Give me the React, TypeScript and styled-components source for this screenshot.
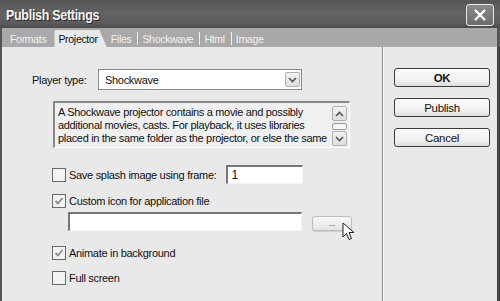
import styled, { createGlobalStyle } from "styled-components"

const GlobalStyle = createGlobalStyle`
	html, body {
		margin: 0;
		padding: 0;
		background: #e9e9e9;
	}
	body {
		font-family: "Liberation Sans", Arial, sans-serif;
	}
`

const Window = styled.div`
	width: 500px;
	height: 301px;
	display: flex;
	flex-direction: column;
	overflow: hidden;
	font-family: "Liberation Sans", Arial, sans-serif;
	font-size: 11px;
	letter-spacing: -0.3px;
	color: #111;
`

const TitleBar = styled.div`
	height: 28px;
	display: flex;
	align-items: center;
	justify-content: space-between;
	padding: 0 6px 0 6px;
	background: linear-gradient(#545454, #646464 45%, #5a5a5a 85%, #4a4a4a);
	box-sizing: border-box;
`

const Title = styled.div`
	font-weight: bold;
	font-size: 12.5px;
	letter-spacing: -0.3px;
	color: #f4f4f4;
	text-shadow: 1px 1px 0 #2a2a2a;
	margin-top: 1px;
	transform: scaleY(1.15);
`

const CloseButton = styled.div`
	width: 26px;
	height: 20px;
	border: 1.5px solid #e8e8e8;
	border-radius: 3px;
	background: linear-gradient(#8a8a8a, #6c6c6c);
	display: flex;
	align-items: center;
	justify-content: center;
	margin-top: 1px;
`

const TabBar = styled.div`
	height: 19px;
	background: #a9a9a9;
	display: flex;
	align-items: flex-end;
	padding-left: 4px;
	border-left: 2px solid #555;
	border-right: 3px solid #555;
`

const Tab = styled.div<{ $active?: boolean }>`
	height: ${(p) => (p.$active ? "17px" : "16px")};
	display: flex;
	align-items: center;
	margin-left: ${(p) => (p.$active ? "3px" : "0")};
	padding: ${(p) => (p.$active ? "0 9px 0 4px" : "0 5px 0 4px")};
	color: ${(p) => (p.$active ? "#111" : "#f2f2f2")};
	background: ${(p) => (p.$active ? "#e9e9e9" : "transparent")};
	border-radius: ${(p) => (p.$active ? "3px 6px 0 0" : "0")};
	clip-path: ${(p) => (p.$active ? "polygon(0 0, 86% 0, 100% 100%, 0 100%)" : "none")};
	font-size: 10.5px;
	letter-spacing: -0.3px;
`

const TabSeparator = styled.div`
	width: 1px;
	height: 13px;
	background: #f0f0f0;
	margin-bottom: 2px;
	margin-left: 1px;
`

const Body = styled.div`
	flex: 1;
	display: flex;
	background: #e9e9e9;
	border-left: 2px solid #555;
	border-right: 3px solid #444;
`

const LeftPane = styled.div`
	flex: 1;
	display: flex;
	flex-direction: column;
	padding-top: 22px;
`

const Divider = styled.div`
	width: 1px;
	background: #8a8a8a;
	border-right: 1px solid #fafafa;
`

const RightPane = styled.div`
	width: 113px;
	display: flex;
	flex-direction: column;
	align-items: center;
	padding-top: 21px;
	gap: 11px;
	box-sizing: border-box;
	padding-left: 3px;
`

const PushButton = styled.div<{ $bold?: boolean }>`
	width: 96px;
	height: 19px;
	box-sizing: border-box;
	border: 1px solid #3c3c3c;
	border-radius: 3px;
	background: linear-gradient(#fbfbfb, #f0f0f0 70%, #dcdcdc);
	display: flex;
	align-items: center;
	justify-content: center;
	font-weight: ${(p) => (p.$bold ? "bold" : "normal")};
	font-size: 11.5px;
`

const Row = styled.div<{ $top: number; $indent: number }>`
	display: flex;
	align-items: center;
	margin-top: ${(p) => p.$top}px;
	padding-left: ${(p) => p.$indent}px;
`

const Label = styled.span`
	width: 66px;
`

const Select = styled.div`
	width: 204px;
	height: 21px;
	box-sizing: border-box;
	background: #fff;
	border: 1px solid #8c8c8c;
	display: flex;
	align-items: center;
	justify-content: space-between;
	padding-left: 6px;
	padding-right: 1px;
`

const ArrowBox = styled.div`
	width: 15px;
	height: 15px;
	border: 1px solid #b0b0b0;
	border-radius: 2px;
	background: linear-gradient(#f4f4f4, #dedede);
	display: flex;
	align-items: center;
	justify-content: center;
	box-sizing: border-box;
`

const Description = styled.div`
	width: 297px;
	height: 47px;
	box-sizing: border-box;
	border: 1px solid #fff;
	border-top: 2px solid #8a8a8a;
	border-left: 2px solid #8a8a8a;
	background: #f0f0f0;
	display: flex;
	padding: 3px 2px 0 3px;
`

const DescriptionText = styled.div`
	flex: 1;
	font-size: 11px;
	line-height: 13px;
	white-space: nowrap;
	overflow: hidden;
	letter-spacing: -0.33px;
`

const ScrollBar = styled.div`
	width: 15px;
	display: flex;
	flex-direction: column;
	justify-content: space-between;
	align-items: center;
	padding-bottom: 1px;
`

const ScrollThumb = styled.div`
	width: 13px;
	height: 5px;
	border: 1px solid #9a9a9a;
	border-radius: 2px;
	background: #f6f6f6;
`

const Box = styled.div`
	width: 12px;
	height: 12px;
	border: 1px solid #6a6a6a;
	background: #f3f3f3;
	display: flex;
	align-items: center;
	justify-content: center;
	margin-right: 3px;
	flex-shrink: 0;
`

const CheckText = styled.span``

const Spacer = styled.span<{ $width: number }>`
	width: ${(p) => p.$width}px;
`

const TextInput = styled.div<{ $width: number }>`
	width: ${(p) => p.$width}px;
	height: 19px;
	box-sizing: border-box;
	background: #fff;
	border: 1px solid #f4f4f4;
	border-top: 2px solid #777;
	border-left: 2px solid #777;
	padding-left: 4px;
	display: flex;
	align-items: center;
	font-size: 12px;
`

const SmallButton = styled.div`
	width: 38px;
	height: 13px;
	margin-left: 10px;
	margin-top: 3px;
	border: 1px solid #bdbdbd;
	border-radius: 3px;
	background: linear-gradient(#f8f8f8, #e4e4e4);
	box-shadow: 0 1px 0 #cfcfcf;
	display: flex;
	align-items: center;
	justify-content: center;
	font-size: 9px;
	color: #555;
	position: relative;
`

const Cursor = styled.svg`
	position: absolute;
	left: 29px;
	top: 5px;
`

const Check = () => (
	<svg width="10" height="10" viewBox="0 0 10 10">
		<path d="M1.5 5 L4 7.5 L8.5 2" fill="none" stroke="#8a8a8a" strokeWidth="1.8" />
	</svg>
)

const Chevron = ({ up }: { up?: boolean }) => (
	<svg width="9" height="6" viewBox="0 0 9 6">
		<path d={up ? "M1 5 L4.5 1.5 L8 5" : "M1 1 L4.5 4.5 L8 1"} fill="none" stroke="#555" strokeWidth="1.6" />
	</svg>
)

const Checkbox = ({ checked, label }: { checked?: boolean; label: string }) => (
	<>
		<Box>{checked && <Check />}</Box>
		<CheckText>{label}</CheckText>
	</>
)

const App = () => {
	return (
		<Window>
			<GlobalStyle />
			<TitleBar>
				<Title>Publish Settings</Title>
				<CloseButton>
					<svg width="14" height="14" viewBox="0 0 14 14">
						<path d="M2 2 L12 12 M12 2 L2 12" stroke="#fff" strokeWidth="2.4" />
					</svg>
				</CloseButton>
			</TitleBar>

			<TabBar>
				<Tab>Formats</Tab>
				<Tab $active>Projector</Tab>
				<Tab>Files</Tab>
				<TabSeparator />
				<Tab>Shockwave</Tab>
				<TabSeparator />
				<Tab>Html</Tab>
				<TabSeparator />
				<Tab>Image</Tab>
			</TabBar>

			<Body>
				<LeftPane>
					<Row $top={0} $indent={30}>
						<Label>Player type:</Label>
						<Select>
							Shockwave
							<ArrowBox>
								<Chevron />
							</ArrowBox>
						</Select>
					</Row>

					<Row $top={11} $indent={51}>
						<Description>
							<DescriptionText>
								A Shockwave projector contains a movie and possibly
								<br />
								additional movies, casts. For playback, it uses libraries
								<br />
								placed in the same folder as the projector, or else the same
							</DescriptionText>
							<ScrollBar>
								<ArrowBox>
									<Chevron up />
								</ArrowBox>
								<ScrollThumb />
								<ArrowBox>
									<Chevron />
								</ArrowBox>
							</ScrollBar>
						</Description>
					</Row>

					<Row $top={17} $indent={50}>
						<Checkbox label="Save splash image using frame:" />
						<Spacer $width={9} />
						<TextInput $width={77}>1</TextInput>
					</Row>

					<Row $top={10} $indent={50}>
						<Checkbox checked label="Custom icon for application file" />
					</Row>

					<Row $top={4} $indent={66}>
						<TextInput $width={234} />
						<SmallButton>
							...
							<Cursor width="14" height="20" viewBox="0 0 14 20">
								<path
									d="M1 1 L1 15 L4.5 11.5 L7 17.5 L9.5 16.5 L7 10.5 L12 10.5 Z"
									fill="#fff"
									stroke="#222"
									strokeWidth="1"
									strokeLinejoin="round"
								/>
							</Cursor>
						</SmallButton>
					</Row>

					<Row $top={15} $indent={50}>
						<Checkbox checked label="Animate in background" />
					</Row>

					<Row $top={11} $indent={50}>
						<Checkbox label="Full screen" />
					</Row>
				</LeftPane>

				<Divider />

				<RightPane>
					<PushButton $bold>OK</PushButton>
					<PushButton>Publish</PushButton>
					<PushButton>Cancel</PushButton>
				</RightPane>
			</Body>
		</Window>
	)
}

export default App
